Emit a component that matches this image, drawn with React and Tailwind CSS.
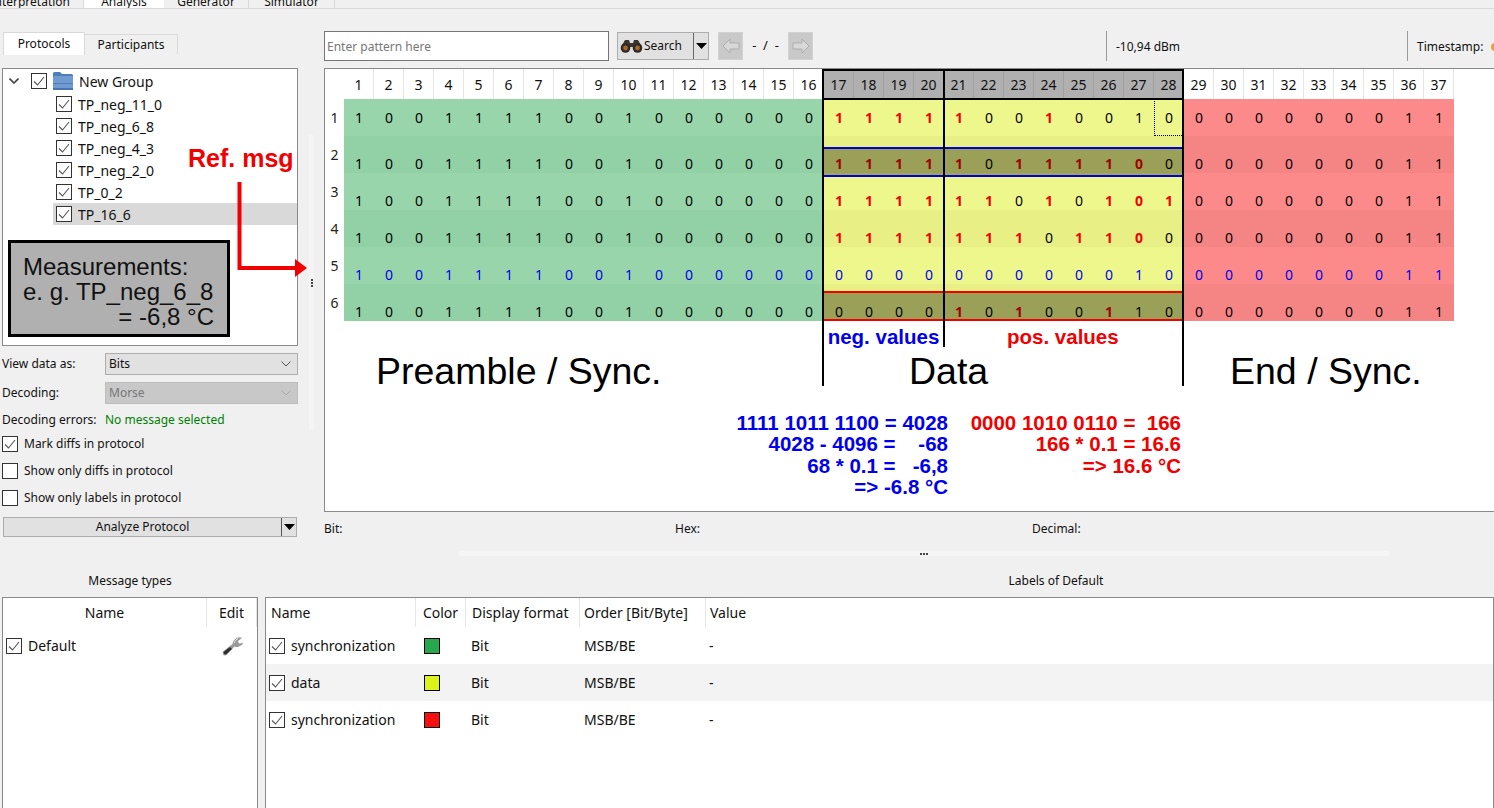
import React from 'react';

const SYNC_BITS = '1001111001000000';
const END_BITS = '000000011';

// data bits for columns 17-28 and which of them are marked red
const ROWS = [
  { data: '111110010010', red: '111110010000' },
  { data: '111110111100', red: '111110111110' },
  { data: '111111010101', red: '111111010111' },
  { data: '111111101100', red: '111111101110' },
  { data: '000000000010', red: '000000000000', blue: true },
  { data: '000010100110', red: '000010100100' },
];

const Check = ({ checked = true }) => (
  <span className="flex-none w-4 h-4 border border-[#333] bg-white flex items-center justify-center">
    {checked && (
      <svg width="14" height="14" viewBox="0 0 14 14" fill="none">
        <polyline points="2,7.5 5.5,11 12,3" stroke="#555" strokeWidth="1.1" />
      </svg>
    )}
  </span>
);

const Caret = () => (
  <svg width="11" height="6" viewBox="0 0 11 6"><polygon points="0,0 11,0 5.5,6" fill="#000" /></svg>
);

const Chevron = ({ color = '#555', stroke = 1 }) => (
  <svg width="10" height="6" viewBox="0 0 10 6" fill="none">
    <polyline points="0.5,0.5 5,5 9.5,0.5" stroke={color} strokeWidth={stroke} />
  </svg>
);

const Folder = () => (
  <svg width="20" height="18" viewBox="0 0 20 18">
    <path d="M0 1.5 Q0 0 1.5 0 H7 L9 2 H18.5 Q20 2 20 3.5 V5 H0 Z" fill="#4f7fb8" />
    <rect x="0" y="4" width="20" height="14" rx="1" fill="#6f9bd1" />
    <rect x="0" y="11" width="20" height="1" fill="#4f7fb8" />
    <rect x="0" y="16" width="20" height="2" fill="#4a76ad" />
  </svg>
);

const Binoculars = () => (
  <svg width="23" height="14" viewBox="0 0 23 14">
    <path d="M5 1 H9 L10 4 H13 L14 1 H18 L22 8 H1 Z" fill="#3b3430" />
    <circle cx="5.5" cy="9" r="4.8" fill="#2f2a27" />
    <circle cx="17.5" cy="9" r="4.8" fill="#2f2a27" />
    <circle cx="5.5" cy="9" r="2.4" fill="#a8682c" />
    <circle cx="17.5" cy="9" r="2.4" fill="#a8682c" />
  </svg>
);

const Wrench = () => (
  <svg width="22" height="20" viewBox="0 0 22 20">
    <path d="M1 15.5 L10.5 8 Q11 3 16 1.5 Q18.5 1 20 2 L16 5 L17 7.5 L20.5 7 L21 5 Q21.5 9 17 10.5 Q14.5 11.5 12.5 10.5 L4.5 19 Q2.5 20 1 18.5 Q0.3 17 1 15.5 Z" fill="#9a9a9a" />
    <path d="M1.5 16 L8 11 L10 13 L4 18.5 Q2 19 1.5 16 Z" fill="#2e2e2e" />
    <path d="M12 7 Q13 3.5 16 2.5" stroke="#e5e5e5" strokeWidth="1" fill="none" />
  </svg>
);

const NavButton = ({ flip }) => (
  <div className="flex-none w-[25px] h-7 bg-[#c9c9c9] border border-[#d2d2d2] flex items-center justify-center">
    <svg width="18" height="16" viewBox="0 0 18 16" className={flip ? 'scale-x-[-1]' : ''}>
      <polygon points="1,8 8,1 8,5 17,5 17,11 8,11 8,15" fill="#d8d8d8" stroke="#adadad" />
    </svg>
  </div>
);

const Cell = ({ bit, bold, red, blue, focus, shifted }) => {
  let color = 'text-black';
  if (red) color = 'text-[#f00000]';
  if (blue) color = 'text-[#0000e6]';
  return (
    <div className={`h-[37px] flex items-center justify-center text-[14px] leading-[19px] ${shifted ? 'pt-[18px]' : ''} ${bold ? 'font-bold' : ''} ${color} ${focus ? 'border border-dotted border-black' : ''}`}>
      {bit}
    </div>
  );
};

const BitRow = ({ row, index }) => {
  const even = index % 2 === 1;
  const shifted = index !== 0;
  return (
    <>
      <div className="h-[37px] bg-white flex items-center justify-center text-[14px] text-[#222]">{index + 1}</div>
      <div className={`col-span-16 grid grid-cols-[repeat(16,30px)] ${even ? 'bg-[#92d0a6]' : 'bg-[#98d5ab]'}`}>
        {SYNC_BITS.split('').map((b, i) => <Cell key={i} bit={b} blue={row.blue} shifted={shifted} />)}
      </div>
      <div className={`col-span-12 grid grid-cols-[repeat(12,30px)] ${even ? 'bg-[#e7ef85]' : 'bg-[#eef78c]'}`}>
        {row.data.split('').map((b, i) => (
          <Cell key={i} bit={b} blue={row.blue} shifted={shifted} red={row.red[i] === '1'} bold={row.red[i] === '1'} focus={index === 0 && i === 11} />
        ))}
      </div>
      <div className={`col-span-9 grid grid-cols-[repeat(9,30px)] ${even ? 'bg-[#f58585]' : 'bg-[#fd8a8a]'}`}>
        {END_BITS.split('').map((b, i) => <Cell key={i} bit={b} blue={row.blue} shifted={shifted} />)}
      </div>
    </>
  );
};

const MainTable = () => (
  <div className="relative w-[1180px] h-[444px] border border-[#8a8a8a] bg-white overflow-hidden">
    <div className="relative w-fit">
      <div className="grid grid-cols-[19px_repeat(37,30px)]">
        <div className="h-[30px] bg-white" />
        {Array.from({ length: 37 }, (_, i) => {
          const marked = i >= 16 && i < 28;
          return (
            <div key={i} className={`h-[30px] flex items-center justify-center text-[14px] text-[#111] border-r ${marked ? 'bg-[#b0b0b0] border-[#9f9f9f]' : 'bg-white border-[#e5e5e5]'}`}>
              {i + 1}
            </div>
          );
        })}
        {ROWS.map((row, i) => <BitRow key={i} row={row} index={i} />)}
      </div>

      {/* hand drawn marks over the table */}
      <div className="absolute left-[499px] top-[78px] w-[358px] h-[30px] bg-[rgba(0,0,0,0.33)] border-y-2 border-[#0000d8]" />
      <div className="absolute left-[499px] top-[222px] w-[358px] h-[30px] bg-[rgba(0,0,0,0.33)] border-y-2 border-[#f00000]" />
      <div className="absolute left-[497px] top-0 w-[362px] h-[252px] border-x-2 border-black pointer-events-none">
        <div className="h-[31px] border-t-2 border-b-2 border-black" />
        <div className="absolute left-[119px] top-0 bottom-0 w-[2px] bg-black" />
      </div>
    </div>

    <div className="flex font-['Liberation_Sans',sans-serif] text-black">
      <div className="w-[497px] h-[65px] pl-[51px] pt-[31px] text-[37.5px] leading-[39px] whitespace-nowrap">Preamble / Sync.</div>
      <div className="w-[362px] h-[65px] border-x-2 border-black flex flex-col">
        <div className="h-[26px] flex font-bold text-[20.5px] leading-[32px]">
          <div className="w-[121px] border-r-2 border-black text-center text-[#0000f0]">neg. values</div>
          <div className="pl-[62px] text-[#f00000]">pos. values</div>
        </div>
        <div className="pl-[85px] pt-[5px] text-[37.5px] leading-[39px]">Data</div>
      </div>
      <div className="pl-[46px] pt-[31px] text-[37.5px] leading-[39px] whitespace-nowrap">End / Sync.</div>
    </div>

    <div className="flex mt-[21px] font-['Liberation_Sans',sans-serif] font-bold text-[20.5px] leading-[21.3px] whitespace-pre text-right">
      <div className="w-[623px] text-[#0000f0]">
        <div>1111 1011 1100 = 4028</div>
        <div>4028 - 4096 =    -68</div>
        <div>68 * 0.1 =   -6,8</div>
        <div>=&gt; -6.8 °C</div>
      </div>
      <div className="w-[233px] text-[#f00000]">
        <div>0000 1010 0110 =  166</div>
        <div>166 * 0.1 = 16.6</div>
        <div>=&gt; 16.6 °C</div>
      </div>
    </div>
  </div>
);

const TreeRow = ({ label, selected }) => (
  <div className={`h-[22px] ml-[50px] pl-[3px] flex items-center gap-[6px] text-[14px] text-[#111] ${selected ? 'bg-[#d9d9d9]' : ''}`}>
    <Check />
    <span>{label}</span>
  </div>
);

const ProtocolTree = () => (
  <div className="relative w-[296px] h-[278px] ml-[2px] border border-[#8a8a8a] bg-white">
    <div className="h-[24px] pl-[6px] flex items-center text-[14px] text-[#111]">
      <Chevron color="#444" stroke={1.6} />
      <span className="ml-[12px]"><Check /></span>
      <span className="ml-[6px] flex"><Folder /></span>
      <span className="ml-[6px]">New Group</span>
    </div>
    {['TP_neg_11_0', 'TP_neg_6_8', 'TP_neg_4_3', 'TP_neg_2_0', 'TP_0_2'].map((t) => <TreeRow key={t} label={t} />)}
    <TreeRow label="TP_16_6" selected />

    <div className="absolute left-[5px] top-[171px] w-[222px] h-[97px] border-[3px] border-black bg-[#b0b0b0] pl-[12px] pr-[13px] pt-[11px] font-['Liberation_Sans',sans-serif] text-[24px] leading-[25px] text-[#111] whitespace-nowrap">
      <div>Measurements:</div>
      <div>e. g. TP_neg_6_8</div>
      <div className="text-right">= -6,8 °C</div>
    </div>
  </div>
);

const SelectRow = ({ label, value, disabled }) => (
  <div className="h-[22px] flex items-center text-[12px] text-[#111]">
    <span className="w-[105px] pl-[2px]">{label}</span>
    <div className={`w-[193px] h-[22px] border flex items-center justify-between pl-[3px] pr-[6px] ${disabled ? 'bg-[#c8c8c8] border-[#bdbdbd] text-[#777]' : 'bg-[#e1e1e1] border-[#adadad]'}`}>
      <span>{value}</span>
      <Chevron color={disabled ? '#a8a8a8' : '#555'} />
    </div>
  </div>
);

const OptionRow = ({ label, checked }) => (
  <div className="h-[27px] pl-[2px] flex items-center gap-[6px] text-[12px] text-[#111]">
    <Check checked={checked} />
    <span>{label}</span>
  </div>
);

const LeftPanel = () => (
  <div className="flex-none w-[324px] relative">
    <div className="h-[59px] pt-[23px] pl-[3px] flex items-start text-[12px] text-[#111]">
      <div className="w-[82px] h-[23px] bg-white border-t border-x border-[#d9d9d9] flex items-center justify-center">Protocols</div>
      <div className="w-[93px] h-[20px] mt-[2px] border-t border-r border-[#d9d9d9] flex items-center justify-center">Participants</div>
    </div>
    <ProtocolTree />
    <div className="mt-[7px]"><SelectRow label="View data as:" value="Bits" /></div>
    <div className="mt-[7px]"><SelectRow label="Decoding:" value="Morse" disabled /></div>
    <div className="h-[29px] pt-[2px] pl-[2px] flex items-center text-[12px] text-[#111]">
      <span className="w-[103px]">Decoding errors:</span>
      <span className="text-[#008000]">No message selected</span>
    </div>
    <div className="mt-[-3px]">
      <OptionRow label="Mark diffs in protocol" checked />
      <OptionRow label="Show only diffs in protocol" checked={false} />
      <OptionRow label="Show only labels in protocol" checked={false} />
    </div>
    <div className="mt-[6px] ml-[3px] w-[294px] h-5 bg-[#e1e1e1] border border-[#adadad] flex items-center text-[12px] text-[#111]">
      <span className="flex-1 text-center">Analyze Protocol</span>
      <span className="w-[15px] h-full border-l border-[#555] flex items-center justify-center"><Caret /></span>
    </div>

    {/* splitter strip and grip */}
    <div className="absolute left-[309px] top-[126px] w-[5px] h-[295px] bg-[#f4f4f4] flex flex-col items-center justify-center gap-[1px]">
      <span className="w-[2px] h-[2px] bg-[#444]" />
      <span className="w-[2px] h-[2px] bg-[#444]" />
      <span className="w-[2px] h-[2px] bg-[#444]" />
    </div>
  </div>
);

const SearchBar = () => (
  <div className="h-[59px] pt-[22px] flex items-start text-[12px] text-[#111]">
    <div className="flex-none w-[285px] h-[30px] bg-white border border-[#767676] flex items-center pl-[2px] pt-[1px] text-[#777]">Enter pattern here</div>
    <div className="flex-none ml-[8px] mt-[1px] w-[92px] h-7 bg-[#e1e1e1] border border-[#adadad] flex items-center">
      <span className="ml-[2px] flex"><Binoculars /></span>
      <span className="ml-[1px] w-[51px]">Search</span>
      <span className="w-[15px] h-full border-l border-[#666] flex items-center justify-center"><Caret /></span>
    </div>
    <div className="flex-none ml-[9px] mt-[1px]"><NavButton /></div>
    <div className="flex-none mt-[1px] w-[45px] h-7 flex items-center justify-center whitespace-pre text-[13px]">-  /  -</div>
    <div className="flex-none mt-[1px]"><NavButton flip /></div>
    <div className="flex-none ml-[293px] h-[30px] border-l border-[#9a9a9a] pl-[9px] pt-[1px] flex items-center w-[301px]">-10,94 dBm</div>
    <div className="flex-none h-[30px] border-l border-[#9a9a9a] pl-[9px] pt-[1px] flex items-center whitespace-nowrap">
      Timestamp:
      <span className="ml-[8px] flex-none w-2 h-2 rounded-full bg-[#e8a040]" />
    </div>
  </div>
);

const LabelRow = ({ name, color, shaded }) => (
  <div className={`h-[37px] flex items-center text-[14px] text-[#111] ${shaded ? 'bg-[#f3f3f3]' : ''}`}>
    <div className="w-[150px] pl-[3px] flex items-center gap-[6px]"><Check /><span>{name}</span></div>
    <div className="w-[50px] pl-[8px]"><span className={`block w-4 h-4 border border-black ${color}`} /></div>
    <div className="w-[114px] pl-[5px]">Bit</div>
    <div className="w-[126px] pl-[4px]">MSB/BE</div>
    <div className="pl-[3px]">-</div>
  </div>
);

const HeaderCell = ({ className, children }) => (
  <div className={`h-[29px] flex items-center border-r border-[#e5e5e5] text-[14px] text-[#111] ${className}`}>{children}</div>
);

export default function App() {
  return (
    <div className="relative w-[1494px] h-[808px] overflow-hidden bg-[#f0f0f0] font-['Noto_Sans',sans-serif]">
      {/* main tabs, cut off by the top of the picture */}
      <div className="h-[9px] border-b border-[#d9d9d9] flex overflow-hidden text-[12px] text-[#111] leading-none">
        <div className="w-[84px] h-[9px] border-r border-[#d9d9d9] flex items-end justify-end pr-[13px] pb-[1px]"><span className="whitespace-nowrap">Interpretation</span></div>
        <div className="w-[80px] h-[9px] bg-white flex items-end justify-center pb-[1px]">Analysis</div>
        <div className="w-[85px] h-[9px] border-r border-[#d9d9d9] flex items-end justify-center pb-[1px]">Generator</div>
        <div className="w-[86px] h-[9px] border-r border-[#d9d9d9] flex items-end justify-center pb-[1px]">Simulator</div>
      </div>

      <div className="flex h-[536px]">
        <LeftPanel />
        <div className="flex-1 min-w-0">
          <SearchBar />
          <MainTable />
          <div className="h-[33px] pt-[1px] flex items-center text-[12px] text-[#111]">
            <span className="w-[351px]">Bit:</span>
            <span className="w-[357px]">Hex:</span>
            <span>Decimal:</span>
          </div>
        </div>
      </div>

      {/* horizontal splitter */}
      <div className="h-[25px] pl-[354px] flex items-start justify-center">
        <div className="mt-[6px] w-[930px] h-[5px] bg-[#f5f5f5] flex items-center justify-center gap-[1px]">
          <span className="w-[2px] h-[2px] bg-[#444]" />
          <span className="w-[2px] h-[2px] bg-[#444]" />
          <span className="w-[2px] h-[2px] bg-[#444]" />
        </div>
      </div>

      <div className="flex h-[27px] pb-[5px] text-[12px] text-[#111]">
        <div className="w-[260px] flex items-center justify-center">Message types</div>
        <div className="w-[1234px] flex items-center justify-center pl-[358px]">Labels of Default</div>
      </div>

      <div className="flex">
        <div className="ml-[2px] w-[256px] h-[214px] border border-[#8a8a8a] bg-white">
          <div className="flex">
            <HeaderCell className="w-[204px] justify-center">Name</HeaderCell>
            <HeaderCell className="w-[50px] justify-center">Edit</HeaderCell>
          </div>
          <div className="h-[37px] pl-[3px] flex items-center gap-[6px] text-[14px] text-[#111]">
            <Check />
            <span className="w-[188px]">Default</span>
            <Wrench />
          </div>
        </div>
        <div className="ml-[7px] w-[1240px] h-[214px] border border-[#8a8a8a] bg-white">
          <div className="flex">
            <HeaderCell className="w-[150px] pl-[5px]">Name</HeaderCell>
            <HeaderCell className="w-[50px] justify-center">Color</HeaderCell>
            <HeaderCell className="w-[114px] pl-[6px]">Display format</HeaderCell>
            <HeaderCell className="w-[126px] pl-[4px]">Order [Bit/Byte]</HeaderCell>
            <HeaderCell className="flex-1 pl-[4px] border-r-0">Value</HeaderCell>
          </div>
          <LabelRow name="synchronization" color="bg-[#27a84f]" />
          <LabelRow name="data" color="bg-[#dcf31a]" shaded />
          <LabelRow name="synchronization" color="bg-[#f81010]" />
        </div>
      </div>

      {/* Ref. msg callout reaches across the splitter */}
      <div className="absolute left-[188px] top-[143px] font-['Liberation_Sans',sans-serif] font-bold text-[25px] leading-[30px] text-[#f00000]">Ref. msg</div>
      <svg className="absolute left-[236px] top-[180px]" width="74" height="100" viewBox="0 0 74 100">
        <polyline points="3.5,2 3.5,88 60,88" fill="none" stroke="#f00000" strokeWidth="4" />
        <polygon points="59,79 71,88 59,97" fill="#f00000" />
      </svg>
    </div>
  );
}
